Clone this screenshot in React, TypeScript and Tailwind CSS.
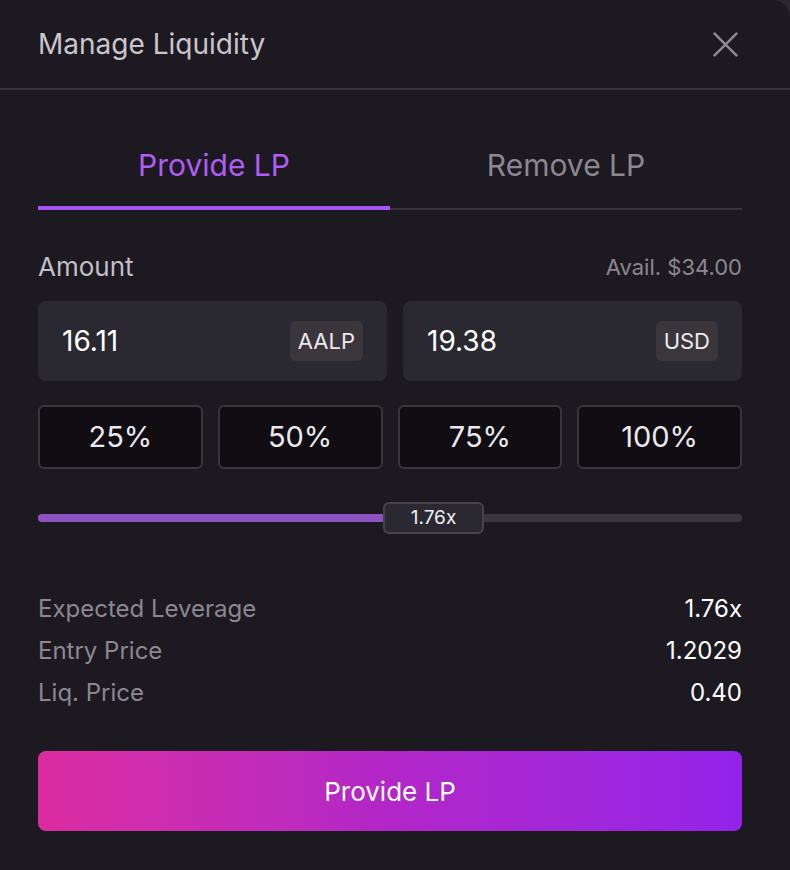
import { useState } from "react";

const font = { fontFamily: "Inter, 'Noto Sans', sans-serif" };

function Stat({ label, value }: { label: string; value: string }) {
  return (
    <div className="flex items-center justify-between leading-[30px]">
      <span className="text-[24px] text-[#8b8890]">{label}</span>
      <span className="text-[24px] text-white">{value}</span>
    </div>
  );
}

export default function App() {
  const [tab, setTab] = useState<"provide" | "remove">("provide");
  const percents = ["25%", "50%", "75%", "100%"];

  return (
    <div className="min-h-screen bg-[#2a2730]" style={font}>
      <div className="min-h-[870px] w-[790px] rounded-tr-[18px] bg-[#1c1920]">
        {/* header */}
        <div className="flex h-[90px] items-center justify-between border-b-2 border-[#38353c] pl-[38px] pr-[52px]">
          <h1 className="text-[28px] font-normal leading-[34px] text-[#c9c6cc]">Manage Liquidity</h1>
          <button className="text-[#8d8a91]">
            <svg width="25" height="25" viewBox="0 0 24 24" fill="none" stroke="currentColor" strokeWidth="2.4" strokeLinecap="round">
              <path d="M1.5 1.5l21 21M22.5 1.5l-21 21" />
            </svg>
          </button>
        </div>

        <div className="pl-[38px] pr-[48px]">
          {/* tabs */}
          <div className="mt-[57px] flex">
            <button
              onClick={() => setTab("provide")}
              className={`flex-1 text-[30px] leading-[36px] ${tab === "provide" ? "border-b-4 border-[#a855f7] pb-[23px] text-[#b15cf2]" : "border-b-2 border-[#38353c] pb-[25px] text-[#8b8890]"}`}
            >
              Provide LP
            </button>
            <button
              onClick={() => setTab("remove")}
              className={`flex-1 text-[30px] leading-[36px] ${tab === "remove" ? "border-b-4 border-[#a855f7] pb-[23px] text-[#b15cf2]" : "border-b-2 border-[#38353c] pb-[25px] text-[#8b8890]"}`}
            >
              Remove LP
            </button>
          </div>

          {/* amount */}
          <div className="mt-[42px] flex items-center justify-between leading-[30px]">
            <span className="text-[26px] text-[#c2bfc6]">Amount</span>
            <span className="text-[22px] text-[#8b8890]">Avail. $34.00</span>
          </div>

          <div className="mt-[19px] grid grid-cols-[349px_1fr] gap-[16px]">
            <div className="flex h-[80px] items-center justify-between rounded-[8px] bg-[#2a2932] px-[24px]">
              <span className="text-[28px] text-white">16.11</span>
              <span className="rounded-[6px] bg-[#3a363c] px-[8px] py-[6px] text-[22px] leading-[28px] text-[#ebe9ee]">AALP</span>
            </div>
            <div className="flex h-[80px] items-center justify-between rounded-[8px] bg-[#2a2932] px-[24px]">
              <span className="text-[28px] text-white">19.38</span>
              <span className="rounded-[6px] bg-[#3a363c] px-[8px] py-[6px] text-[22px] leading-[28px] text-[#ebe9ee]">USD</span>
            </div>
          </div>

          {/* percent buttons */}
          <div className="mt-[24px] grid grid-cols-4 gap-[15px]">
            {percents.map((p) => (
              <button
                key={p}
                className="flex h-[64px] items-center justify-center rounded-[6px] border-2 border-[#38353b] bg-[#110e13] text-[29px] text-[#ebe9ee]"
              >
                {p}
              </button>
            ))}
          </div>

          {/* slider */}
          <div className="relative mt-[45px] h-[8px] rounded-full bg-[#39373c]">
            <div className="h-full w-[49.3%] rounded-full bg-[#8e52c2]" />
            <div className="absolute left-[345px] top-1/2 flex h-[32px] w-[101px] -translate-y-1/2 items-center justify-center rounded-[6px] border-2 border-[#46434a] bg-[#2a2932] text-[19px] text-[#f1eff3]">
              1.76x
            </div>
          </div>

          {/* stats */}
          <div className="mt-[72px] flex flex-col gap-[12px]">
            <Stat label="Expected Leverage" value="1.76x" />
            <Stat label="Entry Price" value="1.2029" />
            <Stat label="Liq. Price" value="0.40" />
          </div>

          {/* action */}
          <button className="mt-[43px] flex h-[80px] w-full items-center justify-center rounded-[8px] bg-gradient-to-r from-[#dc2ba0] via-[#b226c8] to-[#9422ea] text-[26px] text-white">
            Provide LP
          </button>
        </div>
      </div>
    </div>
  );
}
